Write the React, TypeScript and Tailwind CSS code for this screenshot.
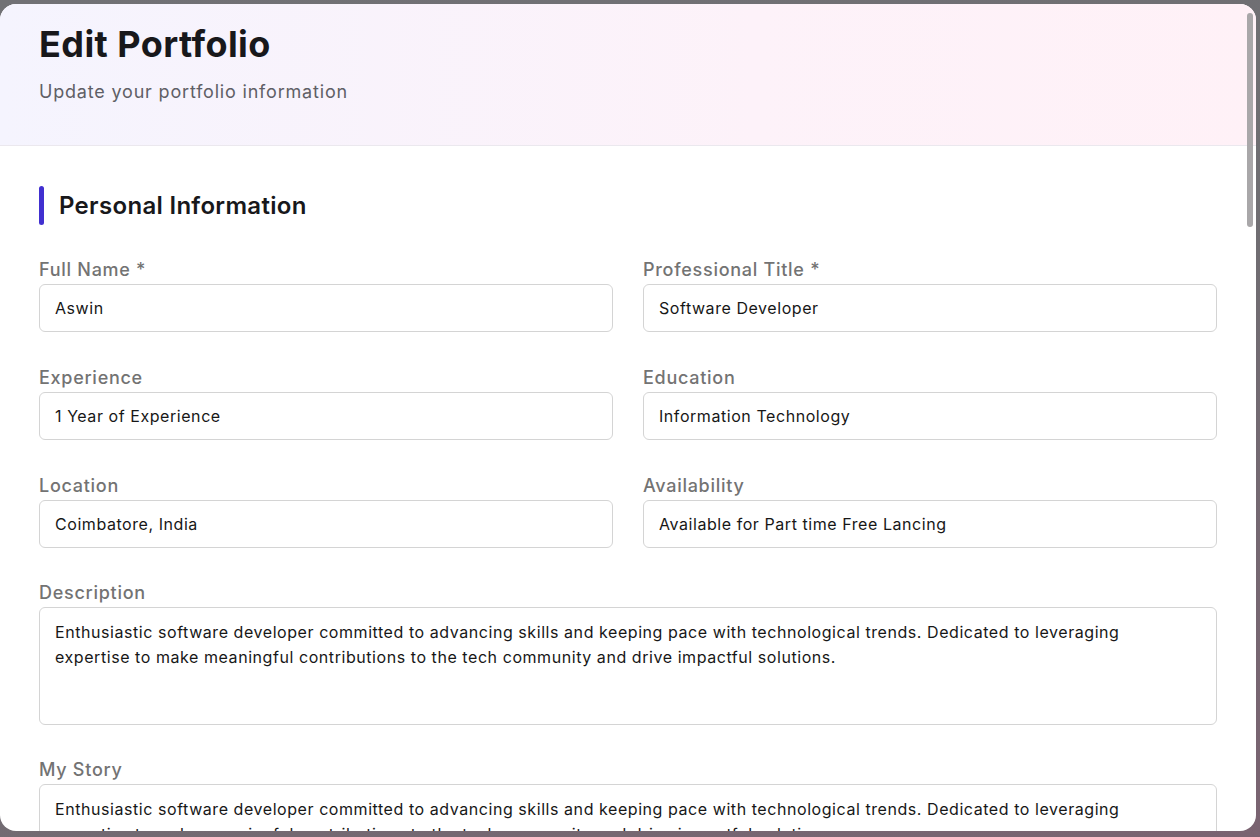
import React from 'react';

const storyText =
  'Enthusiastic software developer committed to advancing skills and keeping pace with technological trends. Dedicated to leveraging expertise to make meaningful contributions to the tech community and drive impactful solutions.';

const fields = [
  { label: 'Full Name *', value: 'Aswin' },
  { label: 'Professional Title *', value: 'Software Developer' },
  { label: 'Experience', value: '1 Year of Experience' },
  { label: 'Education', value: 'Information Technology' },
  { label: 'Location', value: 'Coimbatore, India' },
  { label: 'Availability', value: 'Available for Part time Free Lancing' },
];

const Field = ({ label, value }: { label: string; value: string }) => {
  return (
    <div className="flex flex-col">
      <label className="text-lg leading-7 tracking-[0.04em] text-[#737373] font-medium">{label}</label>
      <input
        readOnly
        value={value}
        className="h-[48px] w-full rounded-md border border-[#d4d4d4] bg-white px-[15px] text-base tracking-[0.035em] text-[#171717] outline-none"
      />
    </div>
  );
};

const AreaField = ({ label, value }: { label: string; value: string }) => {
  return (
    <div className="flex flex-col">
      <label className="text-lg leading-7 tracking-[0.04em] text-[#737373] font-medium">{label}</label>
      <textarea
        readOnly
        value={value}
        className="h-[118px] w-full resize-none rounded-md border border-[#d4d4d4] bg-white pl-[15px] pr-[60px] py-3 text-base leading-[25px] tracking-[0.035em] text-[#171717] outline-none"
      />
    </div>
  );
};

const App = () => {
  return (
    <div className="h-[837px] w-[1260px] overflow-hidden bg-[linear-gradient(160deg,#717175_0%,#6f6e72_50%,#7a6371_100%)] pt-[4px] font-['Inter',sans-serif]">
      <div className="relative h-[827px] w-[1256px] overflow-hidden rounded-2xl bg-white">
        <div className="border-b border-[#ebe8ee] bg-[linear-gradient(90deg,#f5f4fe_0%,#fdf2f9_60%,#fff1f7_100%)] px-[39px] pt-5 pb-[39px]">
          <h1 className="text-4xl leading-10 font-bold tracking-[0.012em] text-[#18181b]">Edit Portfolio</h1>
          <p className="mt-[14px] text-lg leading-7 tracking-[0.045em] text-[#5f5f66]">Update your portfolio information</p>
        </div>

        <div className="px-[39px] pt-10">
          <div className="flex h-[39px] items-center gap-[15px]">
            <div className="h-full w-[5px] rounded-full bg-[#4130d0]"></div>
            <h2 className="text-2xl font-semibold tracking-[0.013em] text-[#18181b]">Personal Information</h2>
          </div>

          <div className="mt-[31px] grid grid-cols-2 gap-x-[30px] gap-y-8">
            {fields.map((f) => (
              <Field key={f.label} label={f.label} value={f.value} />
            ))}
          </div>

          <div className="mt-[31px] flex flex-col gap-[31px]">
            <AreaField label="Description" value={storyText} />
            <AreaField label="My Story" value={storyText} />
          </div>
        </div>

        {/* scrollbar thumb */}
        <div className="absolute top-[9px] right-[3px] h-[214px] w-[6px] rounded-full bg-[#a9a7a9]"></div>
      </div>
    </div>
  );
};

export default App;
